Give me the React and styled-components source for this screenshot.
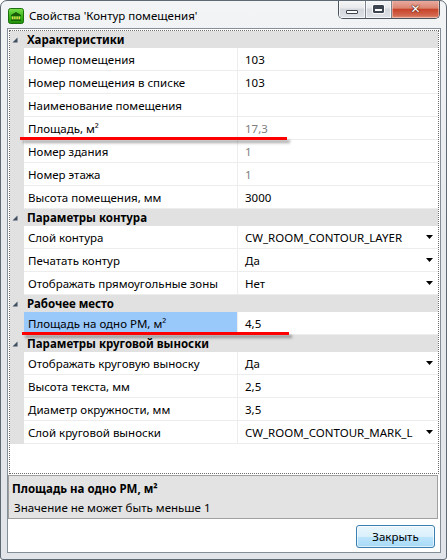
import React from 'react'
import styled, { createGlobalStyle } from 'styled-components'

const GlobalStyle = createGlobalStyle`
  html, body {
    margin: 0;
    padding: 0;
    background: #ffffff;
  }
  * {
    box-sizing: border-box;
  }
`

const sections = [
  {
    title: 'Характеристики',
    items: [
      { label: 'Номер помещения', value: '103' },
      { label: 'Номер помещения в списке', value: '103' },
      { label: 'Наименование помещения', value: '' },
      { label: 'Площадь, м²', value: '17,3', readOnly: true, mark: 10 },
      { label: 'Номер здания', value: '1', readOnly: true },
      { label: 'Номер этажа', value: '1', readOnly: true },
      { label: 'Высота помещения, мм', value: '3000' },
    ],
  },
  {
    title: 'Параметры контура',
    items: [
      { label: 'Слой контура', value: 'CW_ROOM_CONTOUR_LAYER', list: true },
      { label: 'Печатать контур', value: 'Да', list: true },
      { label: 'Отображать прямоугольные зоны', value: 'Нет', list: true },
    ],
  },
  {
    title: 'Рабочее место',
    items: [
      { label: 'Площадь на одно РМ, м²', value: '4,5', selected: true, mark: 12 },
    ],
  },
  {
    title: 'Параметры круговой выноски',
    items: [
      { label: 'Отображать круговую выноску', value: 'Да', list: true },
      { label: 'Высота текста, мм', value: '2,5' },
      { label: 'Диаметр окружности, мм', value: '3,5' },
      { label: 'Слой круговой выноски', value: 'CW_ROOM_CONTOUR_MARK_L', list: true },
    ],
  },
]

const AppIcon = () => (
  <svg width="16" height="16" viewBox="0 0 16 16">
    <defs>
      <linearGradient id="ig" x1="0" y1="0" x2="0" y2="1">
        <stop offset="0" stopColor="#7fe04f" />
        <stop offset="0.5" stopColor="#3cb81c" />
        <stop offset="1" stopColor="#1f8f0c" />
      </linearGradient>
    </defs>
    <rect x="0.5" y="0.5" width="15" height="15" rx="2" fill="url(#ig)" stroke="#1d6e0e" />
    <path d="M3 7 L8 4 L13 7 Z" fill="#175a0a" />
    <rect x="3" y="7" width="10" height="1.2" fill="#175a0a" />
    <rect x="4" y="8.5" width="1.3" height="3" fill="#e9d54a" />
    <rect x="6.2" y="8.5" width="1.3" height="3" fill="#e9d54a" />
    <rect x="8.5" y="8.5" width="1.3" height="3" fill="#e9d54a" />
    <rect x="10.7" y="8.5" width="1.3" height="3" fill="#e9d54a" />
    <rect x="3" y="11.5" width="10" height="1.3" fill="#175a0a" />
  </svg>
)

const Expander = () => (
  <svg width="6" height="6" viewBox="0 0 6 6">
    <polygon points="5.5,0.5 5.5,5.5 0.5,5.5" fill="#3f4d60" />
  </svg>
)

const DropArrow = () => (
  <svg width="7" height="4" viewBox="0 0 7 4">
    <polygon points="0,0 7,0 3.5,4" fill="#000" />
  </svg>
)

const App = () => (
  <>
    <GlobalStyle />
    <Window>
      <TitleBar>
        <IconSlot>
          <AppIcon />
        </IconSlot>
        <Caption>Свойства 'Контур помещения'</Caption>
        <CaptionButtons>
          <CapButton $w={27}>
            <MinGlyph />
          </CapButton>
          <CapButton $w={26}>
            <MaxGlyph />
          </CapButton>
          <CloseButton>
            <CloseGlyph>✕</CloseGlyph>
          </CloseButton>
        </CaptionButtons>
      </TitleBar>

      <Client>
        <GridWrap>
          <Grid>
            {sections.map((section) => (
              <React.Fragment key={section.title}>
                <Category>
                  <CategoryGlyph>
                    <Expander />
                  </CategoryGlyph>
                  <CategoryTitle>{section.title}</CategoryTitle>
                </Category>
                {section.items.map((item) => (
                  <Row key={item.label} $mark={item.mark}>
                    <Margin />
                    <Label $selected={item.selected}>{item.label}</Label>
                    <Value $readOnly={item.readOnly}>
                      <span>{item.value}</span>
                      {item.list && <DropArrow />}
                    </Value>
                  </Row>
                ))}
              </React.Fragment>
            ))}
          </Grid>
        </GridWrap>

        <Help>
          <HelpTitle>Площадь на одно РМ, м²</HelpTitle>
          <HelpText>Значение не может быть меньше 1</HelpText>
        </Help>

        <Footer>
          <PushButton>Закрыть</PushButton>
        </Footer>
      </Client>
    </Window>
  </>
)

export default App

const Window = styled.div`
  position: relative;
  width: 447px;
  height: 560px;
  display: flex;
  flex-direction: column;
  padding: 0 5px 6px 6px;
  border: 1px solid #5f6974;
  border-radius: 7px 7px 3px 3px;
  background: linear-gradient(#f2f4f6, #e6e9ec 40%, #e1e4e8);
  font-family: 'Noto Sans', 'Open Sans', sans-serif;
  font-size: 11.5px;
  color: #000;
  overflow: hidden;
`

const TitleBar = styled.div`
  display: flex;
  align-items: flex-start;
  height: 27px;
  flex-shrink: 0;
`

const IconSlot = styled.div`
  display: flex;
  margin: 7px 0 0 1px;
`

const Caption = styled.div`
  margin: 7px 0 0 5px;
  line-height: 16px;
  white-space: nowrap;
`

const CaptionButtons = styled.div`
  display: flex;
  margin: -1px 1px 0 auto;
  height: 19px;
  border: 1px solid #4b535d;
  border-top: none;
  border-radius: 0 0 5px 5px;
  overflow: hidden;
`

const CapButton = styled.div`
  width: ${(props) => props.$w}px;
  height: 100%;
  display: flex;
  align-items: center;
  justify-content: center;
  border-right: 1px solid #7c848e;
  background: linear-gradient(#f7f8f9, #e7e9ec 45%, #d3d7dc 50%, #dfe2e6);
  box-shadow: inset 0 0 0 1px rgba(255, 255, 255, 0.7);
`

const MinGlyph = styled.div`
  width: 12px;
  height: 4px;
  margin-top: 6px;
  border: 1px solid #3d4550;
  background: #fff;
  border-radius: 1px;
`

const MaxGlyph = styled.div`
  width: 11px;
  height: 8px;
  border: 1px solid #3d4550;
  border-top-width: 3px;
  background: #fff;
  box-shadow: inset 0 0 0 1px #3d4550;
  border-radius: 1px;
  outline: 1px solid rgba(255, 255, 255, 0.8);
`

const CloseButton = styled.div`
  width: 47px;
  height: 100%;
  display: flex;
  align-items: center;
  justify-content: center;
  background: linear-gradient(#eab0a4, #dc8572 45%, #c7442a 52%, #d2654d 85%, #e0957f);
  box-shadow: inset 0 0 0 1px rgba(255, 220, 210, 0.5);
`

const CloseGlyph = styled.span`
  font-family: 'DejaVu Sans', sans-serif;
  font-size: 12px;
  font-weight: bold;
  line-height: 1;
  color: #fff;
  text-shadow: 0 0 1px #5a1a10, 0 0 1px #5a1a10, 0 0 2px #7a2a1a;
`

const Client = styled.div`
  flex: 1;
  display: flex;
  flex-direction: column;
  border: 1px solid #858d97;
  background: #fff;
  min-height: 0;
`

const GridWrap = styled.div`
  flex: 1;
  display: flex;
  padding: 1px 1px 1px 1px;
  min-height: 0;
`

const Grid = styled.div`
  flex: 1;
  border: 1px dotted #6e6e6e;
  background: #fff;
  overflow: hidden;
`

const Category = styled.div`
  display: flex;
  align-items: center;
  height: 17px;
  background: #e1e1e1;
`

const CategoryGlyph = styled.div`
  display: flex;
  width: 17px;
  padding: 1px 0 0 2px;
`

const CategoryTitle = styled.div`
  font-weight: bold;
  line-height: 16px;
  color: #000;
`

const Row = styled.div`
  position: relative;
  display: grid;
  grid-template-columns: 14px 214px 1fr;
  height: 23px;

  ${(props) =>
    props.$mark !== undefined &&
    `
    &::after {
      content: '';
      position: absolute;
      left: ${props.$mark}px;
      top: 20px;
      width: 267px;
      height: 3px;
      background: #ff0000;
      box-shadow: 3px 3px 3px rgba(0, 0, 0, 0.35);
      z-index: 2;
    }
  `}
`

const Margin = styled.div`
  background: #e1e1e1;
`

const Label = styled.div`
  display: flex;
  align-items: center;
  padding-left: 4px;
  border-right: 1px solid #ededed;
  border-bottom: 1px solid #ededed;
  background: ${(props) => (props.$selected ? '#99c8fb' : '#fff')};
  white-space: nowrap;
  overflow: hidden;
`

const Value = styled.div`
  display: flex;
  align-items: center;
  justify-content: space-between;
  padding: 0 5px 0 7px;
  border-bottom: 1px solid #ededed;
  color: ${(props) => (props.$readOnly ? '#808080' : '#000')};
  white-space: nowrap;
  overflow: hidden;
`

const Help = styled.div`
  flex-shrink: 0;
  height: 44px;
  margin-right: 2px;
  padding: 5px 0 0 3px;
  border: 1px solid #a0a0a0;
  background: #e3e3e3;
`

const HelpTitle = styled.div`
  font-weight: bold;
  line-height: 16px;
`

const HelpText = styled.div`
  margin-top: 3px;
  padding-left: 2px;
  line-height: 16px;
`

const Footer = styled.div`
  flex-shrink: 0;
  height: 33px;
  display: flex;
  justify-content: flex-end;
  align-items: flex-start;
  padding: 6px 5px 0 0;
`

const PushButton = styled.div`
  width: 79px;
  height: 23px;
  display: flex;
  align-items: center;
  justify-content: center;
  border: 1px solid #3c7fb1;
  border-radius: 3px;
  background: linear-gradient(#eaf6fd, #d9f0fc 50%, #bee6fd 51%, #a7d9f5);
  box-shadow: inset 0 0 0 1px rgba(255, 255, 255, 0.6);
  padding-bottom: 1px;
`
